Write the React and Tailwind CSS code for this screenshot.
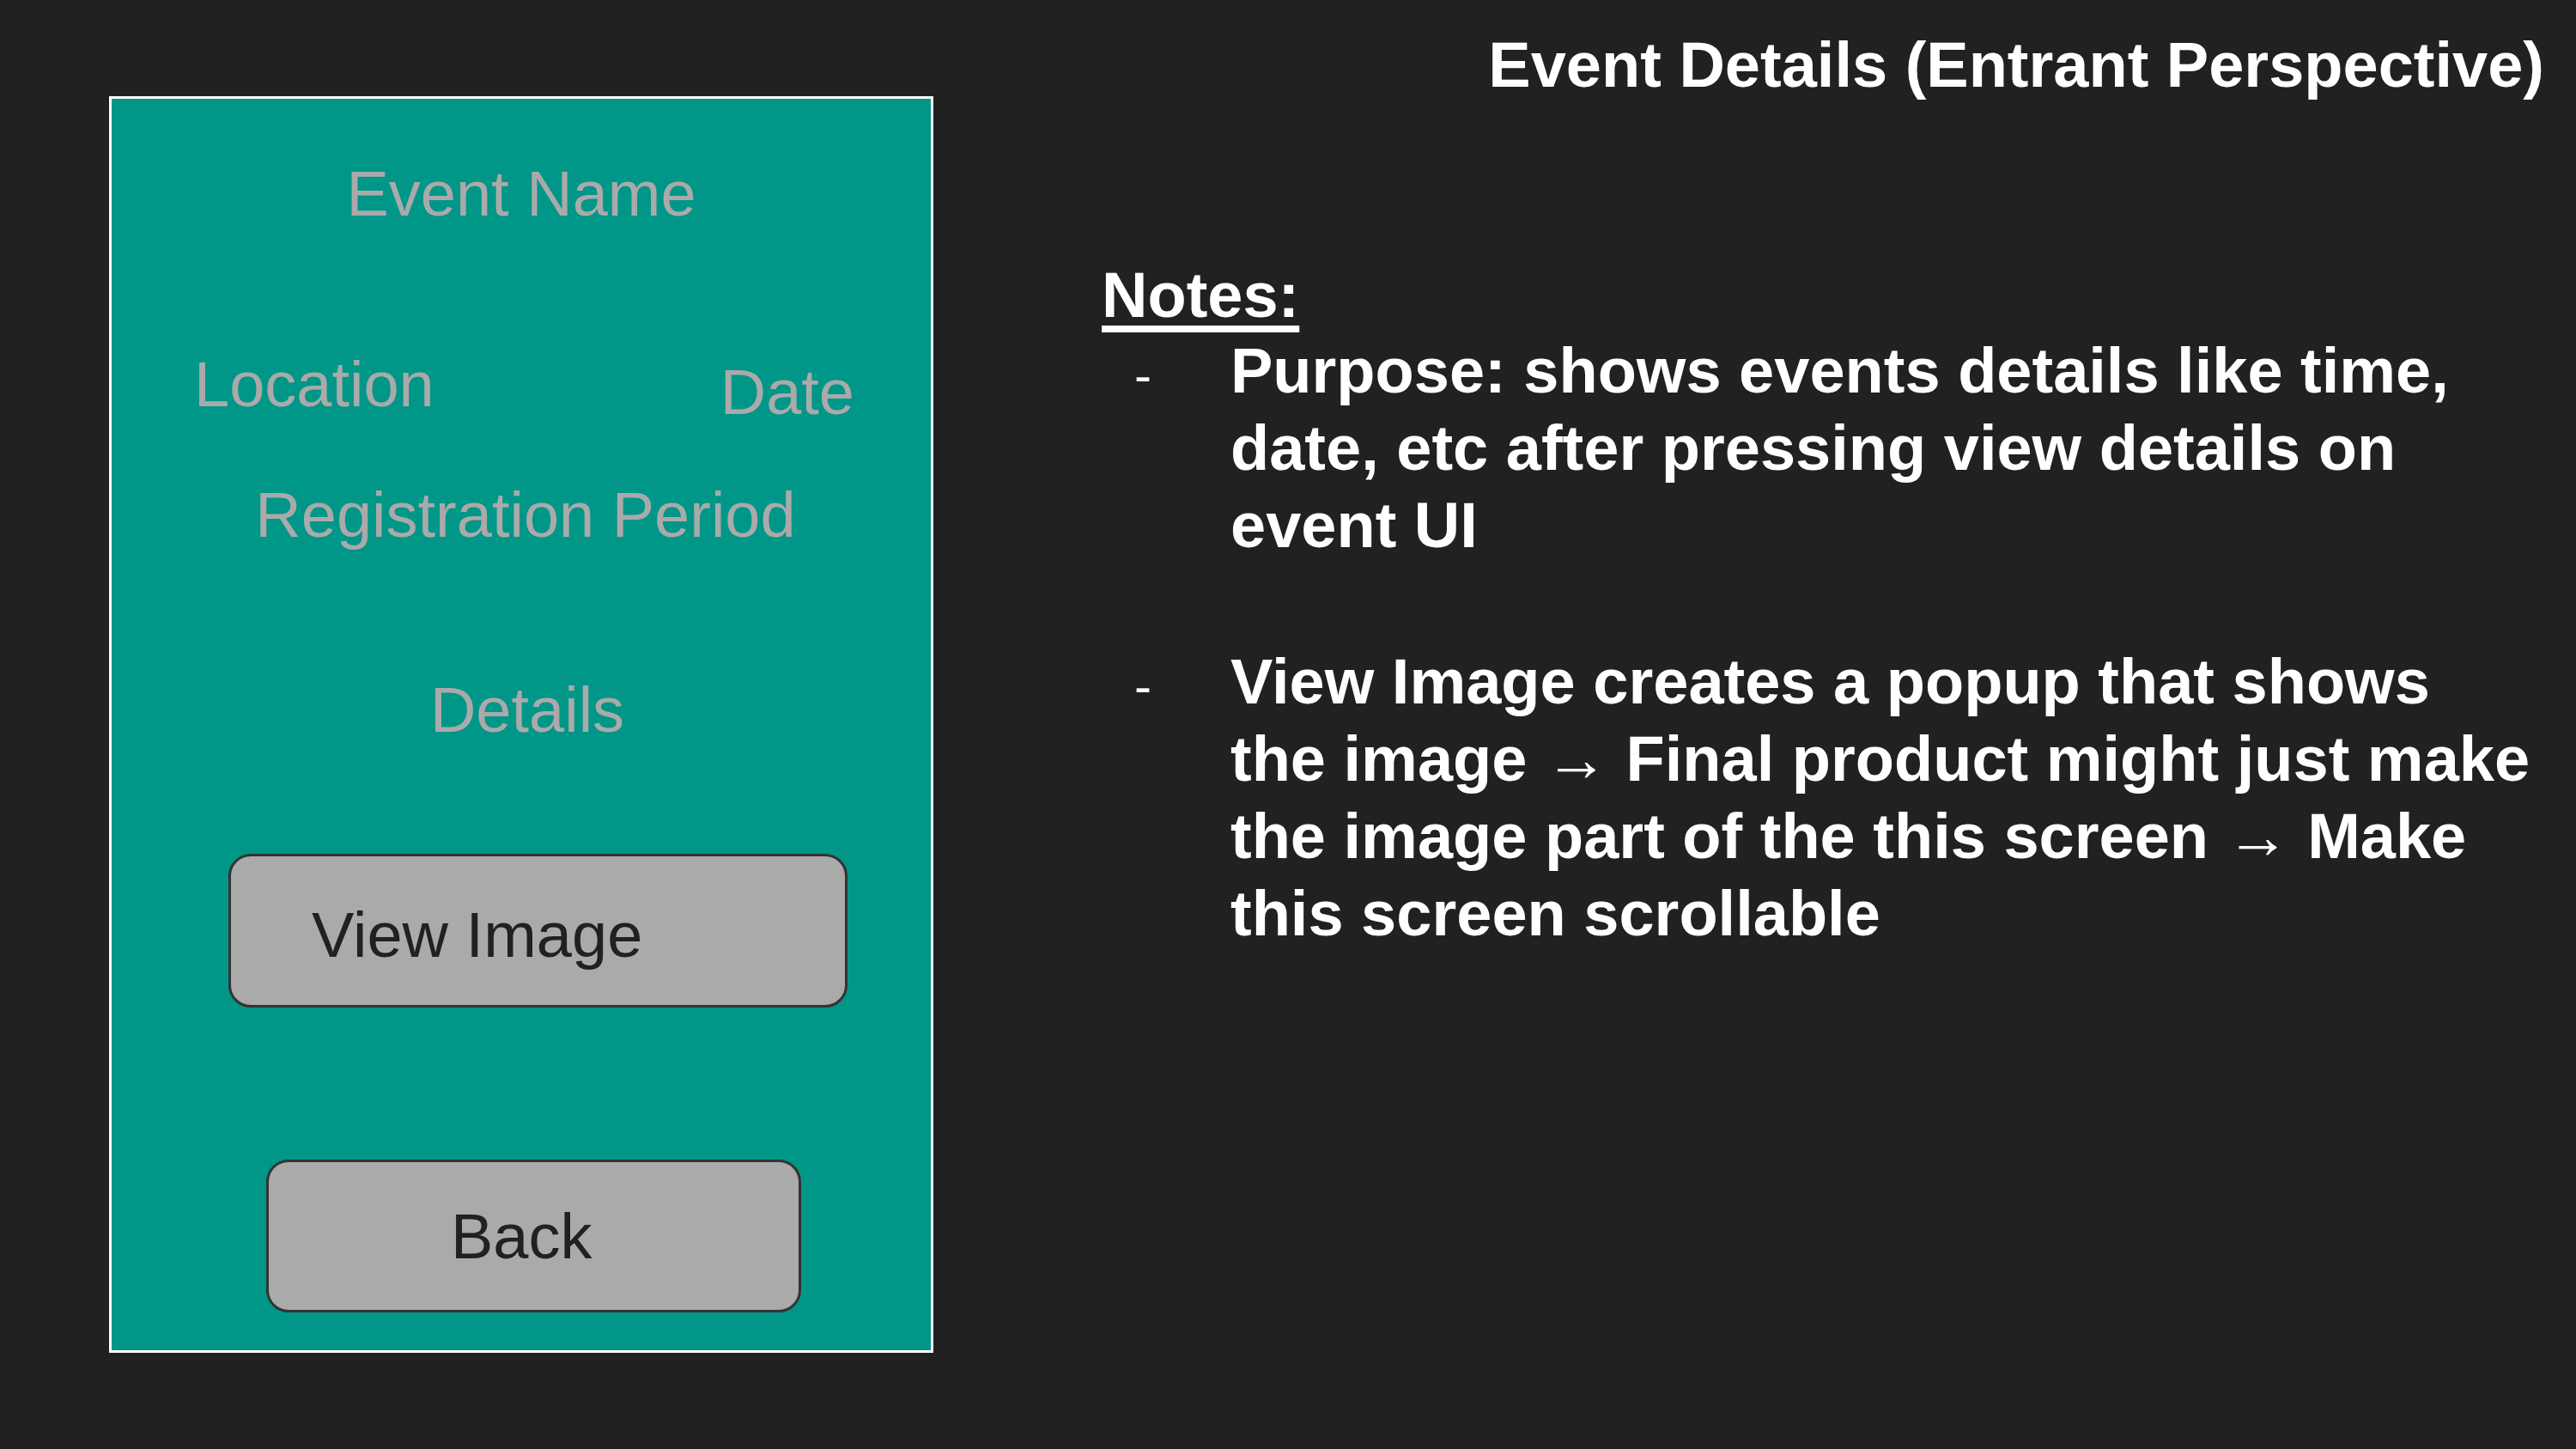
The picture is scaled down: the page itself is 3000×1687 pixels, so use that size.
const font = { fontFamily: '"Liberation Sans", Arial, sans-serif' };

function PhoneMock() {
  return (
    <div className="mt-[112px] ml-[127px] flex h-[1463px] w-[960px] shrink-0 flex-col border-[3px] border-white bg-[#009688] text-[74px] leading-[74px] text-[#aaaaaa]">
      <p className="mt-[74px] text-center">Event Name</p>

      <div className="mt-[148px] flex items-start justify-between pl-[96px] pr-[89px]">
        <span>Location</span>
        <span className="mt-[9px]">Date</span>
      </div>

      <p className="mt-[69px] pl-[10px] text-center">Registration Period</p>

      <p className="mt-[153px] pl-[14px] text-center">Details</p>

      <button className="mt-[130px] ml-[136px] h-[179px] w-[721px] rounded-[26px] border-[3px] border-[#333333] bg-[#aaaaaa] pl-[94px] pt-[10px] text-left text-[#212121]">
        <span className="block leading-[74px]">View Image</span>
      </button>

      <button className="mt-[177px] ml-[180px] h-[178px] w-[623px] rounded-[26px] border-[3px] border-[#333333] bg-[#aaaaaa] pl-[212px] pt-[2px] text-left text-[#212121]">
        <span className="block leading-[74px]">Back</span>
      </button>
    </div>
  );
}

function Note({ lines }) {
  return (
    <div className="flex items-baseline">
      <span className="w-[150px] shrink-0 pl-[38px] text-[60px] font-normal">-</span>
      <p className="whitespace-nowrap">
        {lines.map((l, i) => (
          <span key={i} className="block">{l}</span>
        ))}
      </p>
    </div>
  );
}

export default function App() {
  return (
    <div className="flex h-[1687px] w-full bg-[#212121] text-white" style={font}>
      <PhoneMock />

      <div className="flex flex-1 flex-col">
        <h1 className="self-end pr-[37px] pt-[39px] text-[74px] font-bold leading-[74px]">
          Event Details (Entrant Perspective)
        </h1>

        <div className="mt-[187px] ml-[196px] text-[74px] font-bold leading-[90px]">
          <p className="leading-[87px] underline decoration-[8px] underline-offset-[10px]">Notes:</p>
          <Note
            lines={[
              'Purpose: shows events details like time,',
              'date, etc after pressing view details on',
              'event UI',
            ]}
          />
          <div className="mt-[92px]">
            <Note
              lines={[
                'View Image creates a popup that shows',
                'the image \u2192 Final product might just make',
                'the image part of the this screen \u2192 Make',
                'this screen scrollable',
              ]}
            />
          </div>
        </div>
      </div>
    </div>
  );
}
